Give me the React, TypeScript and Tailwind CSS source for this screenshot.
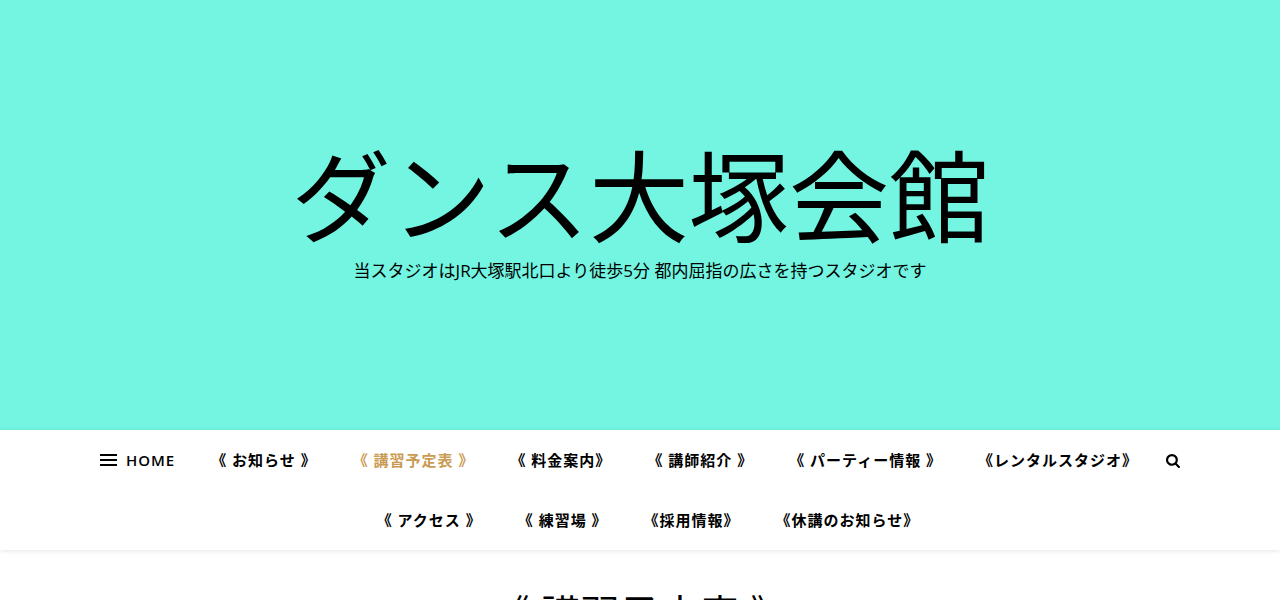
const firstRow = [
    'HOME',
    '《 お知らせ 》',
    '《 講習予定表 》',
    '《 料金案内》',
    '《 講師紹介 》',
    '《 パーティー情報 》',
    '《レンタルスタジオ》',
];

const secondRow = ['《 アクセス 》', '《 練習場 》', '《採用情報》', '《休講のお知らせ》'];

const current = '《 講習予定表 》';

function MenuRow({ labels, className }: { labels: string[]; className: string }) {
    return (
        <ul className={`flex flex-wrap justify-center ${className}`}>
            {labels.map((label) => (
                <li key={label} className="px-[18px]">
                    <a href="#" className={label === current ? 'text-[#ca9b52]' : 'hover:text-[#ca9b52]'}>
                        {label}
                    </a>
                </li>
            ))}
        </ul>
    );
}

export default function App() {
    return (
        <div className="bg-white font-['Open_Sans','Noto_Sans_CJK_JP',sans-serif] text-black">
            <header className="flex h-[430px] flex-col items-center justify-center bg-[#73f5e1] pb-2 text-center">
                <a href="#" className="text-[100px] leading-[120px]">
                    ダンス大塚会館
                </a>
                <p className="text-[17px] leading-[30px]">
                    当スタジオはJR大塚駅北口より徒歩5分 都内屈指の広さを持つスタジオです
                </p>
            </header>

            <nav className="relative px-[100px] text-[15px] font-semibold leading-[60px] tracking-[1px] shadow-[0_1px_5px_rgba(0,0,0,0.1)]">
                <button type="button" aria-label="メニュー" className="absolute left-[100px] top-6 flex flex-col gap-[3px]">
                    <span className="h-[2px] w-[17px] bg-black" />
                    <span className="h-[2px] w-[17px] bg-black" />
                    <span className="h-[2px] w-[17px] bg-black" />
                </button>
                <MenuRow labels={firstRow} className="pr-4" />
                <MenuRow labels={secondRow} className="pl-4" />
                <button type="button" aria-label="検索" className="absolute right-[100px] top-6">
                    <svg viewBox="0 128 1664 1664" fill="currentColor" className="size-[14px]">
                        <path d="M1152 832q0-185-131.5-316.5t-316.5-131.5-316.5 131.5-131.5 316.5 131.5 316.5 316.5 131.5 316.5-131.5 131.5-316.5zm512 832q0 52-38 90t-90 38q-54 0-90-38l-343-342q-179 124-399 124-143 0-273.5-55.5t-225-150-150-225-55.5-273.5 55.5-273.5 150-225 225-150 273.5-55.5 273.5 55.5 225 150 150 225 55.5 273.5q0 220-124 399l343 343q37 37 37 90z" />
                    </svg>
                </button>
            </nav>

            <main className="pt-[34px] text-center">
                <h1 className="text-[40px] leading-[60px]">《 講習予定表 》</h1>
            </main>
        </div>
    );
}
